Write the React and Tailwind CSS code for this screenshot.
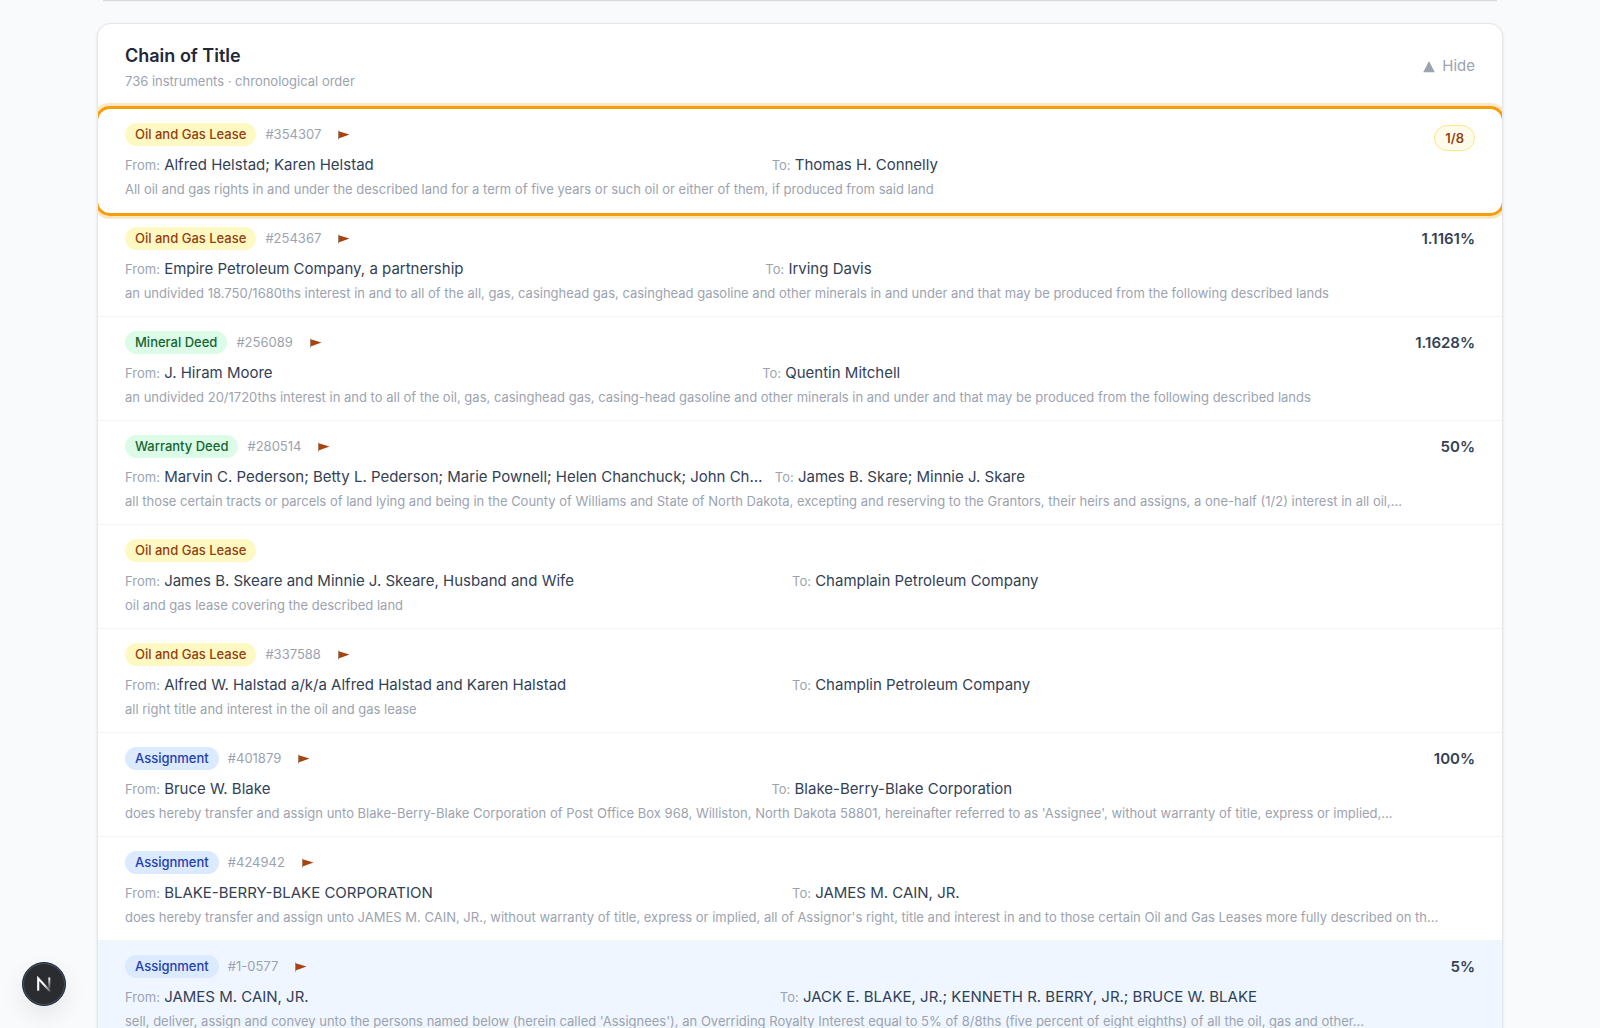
const BADGES = {
  "Oil and Gas Lease": "bg-[#fef9c3] text-[#92400e]",
  "Mineral Deed": "bg-[#dcfce7] text-[#166534]",
  "Warranty Deed": "bg-[#dcfce7] text-[#166534]",
  Assignment: "bg-[#dbeafe] text-[#1e40af]",
};

const INSTRUMENTS = [
  {
    type: "Oil and Gas Lease",
    number: "#354307",
    from: "Alfred Helstad; Karen Helstad",
    to: "Thomas H. Connelly",
    text: "All oil and gas rights in and under the described land for a term of five years or such oil or either of them, if produced from said land",
    royalty: "1/8",
    selected: true,
  },
  {
    type: "Oil and Gas Lease",
    number: "#254367",
    from: "Empire Petroleum Company, a partnership",
    to: "Irving Davis",
    text: "an undivided 18.750/1680ths interest in and to all of the all, gas, casinghead gas, casinghead gasoline and other minerals in and under and that may be produced from the following described lands",
    interest: "1.1161%",
  },
  {
    type: "Mineral Deed",
    number: "#256089",
    from: "J. Hiram Moore",
    to: "Quentin Mitchell",
    text: "an undivided 20/1720ths interest in and to all of the oil, gas, casinghead gas, casing-head gasoline and other minerals in and under and that may be produced from the following described lands",
    interest: "1.1628%",
  },
  {
    type: "Warranty Deed",
    number: "#280514",
    from: "Marvin C. Pederson; Betty L. Pederson; Marie Pownell; Helen Chanchuck; John Ch…",
    to: "James B. Skare; Minnie J. Skare",
    text: "all those certain tracts or parcels of land lying and being in the County of Williams and State of North Dakota, excepting and reserving to the Grantors, their heirs and assigns, a one-half (1/2) interest in all oil,…",
    interest: "50%",
  },
  {
    type: "Oil and Gas Lease",
    from: "James B. Skeare and Minnie J. Skeare, Husband and Wife",
    to: "Champlain Petroleum Company",
    text: "oil and gas lease covering the described land",
  },
  {
    type: "Oil and Gas Lease",
    number: "#337588",
    from: "Alfred W. Halstad a/k/a Alfred Halstad and Karen Halstad",
    to: "Champlin Petroleum Company",
    text: "all right title and interest in the oil and gas lease",
  },
  {
    type: "Assignment",
    number: "#401879",
    from: "Bruce W. Blake",
    to: "Blake-Berry-Blake Corporation",
    text: "does hereby transfer and assign unto Blake-Berry-Blake Corporation of Post Office Box 968, Williston, North Dakota 58801, hereinafter referred to as 'Assignee', without warranty of title, express or implied,…",
    interest: "100%",
  },
  {
    type: "Assignment",
    number: "#424942",
    from: "BLAKE-BERRY-BLAKE CORPORATION",
    to: "JAMES M. CAIN, JR.",
    text: "does hereby transfer and assign unto JAMES M. CAIN, JR., without warranty of title, express or implied, all of Assignor's right, title and interest in and to those certain Oil and Gas Leases more fully described on th…",
  },
  {
    type: "Assignment",
    number: "#1-0577",
    from: "JAMES M. CAIN, JR.",
    to: "JACK E. BLAKE, JR.; KENNETH R. BERRY, JR.; BRUCE W. BLAKE",
    text: "sell, deliver, assign and convey unto the persons named below (herein called 'Assignees'), an Overriding Royalty Interest equal to 5% of 8/8ths (five percent of eight eighths) of all the oil, gas and other…",
    interest: "5%",
    hovered: true,
  },
];

function Party({ label, name }) {
  return (
    <p className="truncate text-[15px] leading-6 text-[#334155]">
      <span className="text-[13px] text-[#9ca3af]">{label}</span> {name}
    </p>
  );
}

function Flag() {
  return (
    <svg viewBox="0 0 12 10" className="ml-2 h-[10px] w-3" aria-hidden="true">
      <path d="M0.5 0.5V9.8" stroke="#a8a29e" strokeWidth="0.9" />
      <path d="M0.6 1.2L11.5 4.4L0.6 8.6Z" fill="#a84310" />
    </svg>
  );
}

function Instrument({ item }) {
  const state = item.selected
    ? "relative z-10 rounded-xl bg-white border-transparent shadow-[0_0_0_3px_#f59e0b,0_0_0_6px_rgba(245,158,11,0.25)]"
    : item.hovered
      ? "bg-[#eff6ff] border-[#f3f4f6]"
      : "border-[#f3f4f6]";
  return (
    <li className={`flex items-start gap-5 border-b px-[27px] pt-[14px] pb-[13px] ${state}`}>
      <div className="min-w-0 flex-1">
        <div className="flex h-[23px] items-center gap-[9px]">
          <span className={`rounded-full px-[10px] text-[13px] leading-[23px] font-medium ${BADGES[item.type]}`}>
            {item.type}
          </span>
          {item.number && (
            <>
              <span className="text-[13px] text-[#9ca3af]">{item.number}</span>
              <Flag />
            </>
          )}
        </div>
        <div className="mt-[7px] grid grid-cols-2 gap-1">
          <Party label="From:" name={item.from} />
          <Party label="To:" name={item.to} />
        </div>
        <p className="mt-[2px] truncate text-[13px] leading-5 text-[#9ca3af]">{item.text}</p>
      </div>
      <div className="shrink-0">
        {item.interest && (
          <span className="block text-[15px] leading-6 font-semibold text-[#334155]">{item.interest}</span>
        )}
        {item.royalty && (
          <span className="mt-[2px] block rounded-full border border-[#fde68a] bg-[#fffbeb] px-[10px] text-[13px] leading-6 font-semibold text-[#92400e]">
            {item.royalty}
          </span>
        )}
      </div>
    </li>
  );
}

export default function App() {
  return (
    <div className="h-screen overflow-hidden bg-[#f8fafc] px-[97px] font-[Inter,sans-serif]">
      <div className="mx-1.5 h-px bg-[#d8dbe0] shadow-xs" />
      <section className="mt-[22px] rounded-[14px] border border-[#e5e7eb] bg-white shadow-sm overflow-hidden">
        <header className="flex h-[85px] items-center justify-between px-[27px]">
          <div>
            <h2 className="text-lg leading-7 font-semibold text-[#1f2937]">Chain of Title</h2>
            <p className="text-[13px] leading-[22px] text-[#9ca3af]">736 instruments · chronological order</p>
          </div>
          <button type="button" className="flex items-center gap-[7px] text-[15px] text-[#9ca3af]">
            <svg viewBox="0 0 12 12" className="size-3" aria-hidden="true">
              <path d="M6 0L11.8 11.2H0.2Z" fill="currentColor" />
            </svg>
            Hide
          </button>
        </header>
        <ul>
          {INSTRUMENTS.map((item) => (
            <Instrument key={item.type + item.from} item={item} />
          ))}
        </ul>
      </section>
      <button
        type="button"
        aria-label="Open developer tools"
        className="fixed bottom-[22px] left-[22px] z-20 flex size-11 items-center justify-center rounded-full border border-[#1e293b] bg-[#2b2c2f] shadow-[0_10px_24px_rgba(0,0,0,0.08)] ring-1 ring-[#475569] ring-inset"
      >
        <svg viewBox="0 0 16 16" className="size-4" fill="none" aria-hidden="true">
          <defs>
            <linearGradient id="stem" x1="0" y1="1" x2="0" y2="13" gradientUnits="userSpaceOnUse">
              <stop stopColor="#fff" />
              <stop offset="1" stopColor="#fff" stopOpacity="0.1" />
            </linearGradient>
            <linearGradient id="diagonal" x1="8" y1="8" x2="14" y2="15.5" gradientUnits="userSpaceOnUse">
              <stop stopColor="#fff" />
              <stop offset="1" stopColor="#fff" stopOpacity="0.2" />
            </linearGradient>
          </defs>
          <path d="M2.2 14.8V2.4L14 15.3" stroke="url(#diagonal)" strokeWidth="2.1" />
          <path d="M13.3 1.5V12.5" stroke="url(#stem)" strokeWidth="2" />
        </svg>
      </button>
    </div>
  );
}
